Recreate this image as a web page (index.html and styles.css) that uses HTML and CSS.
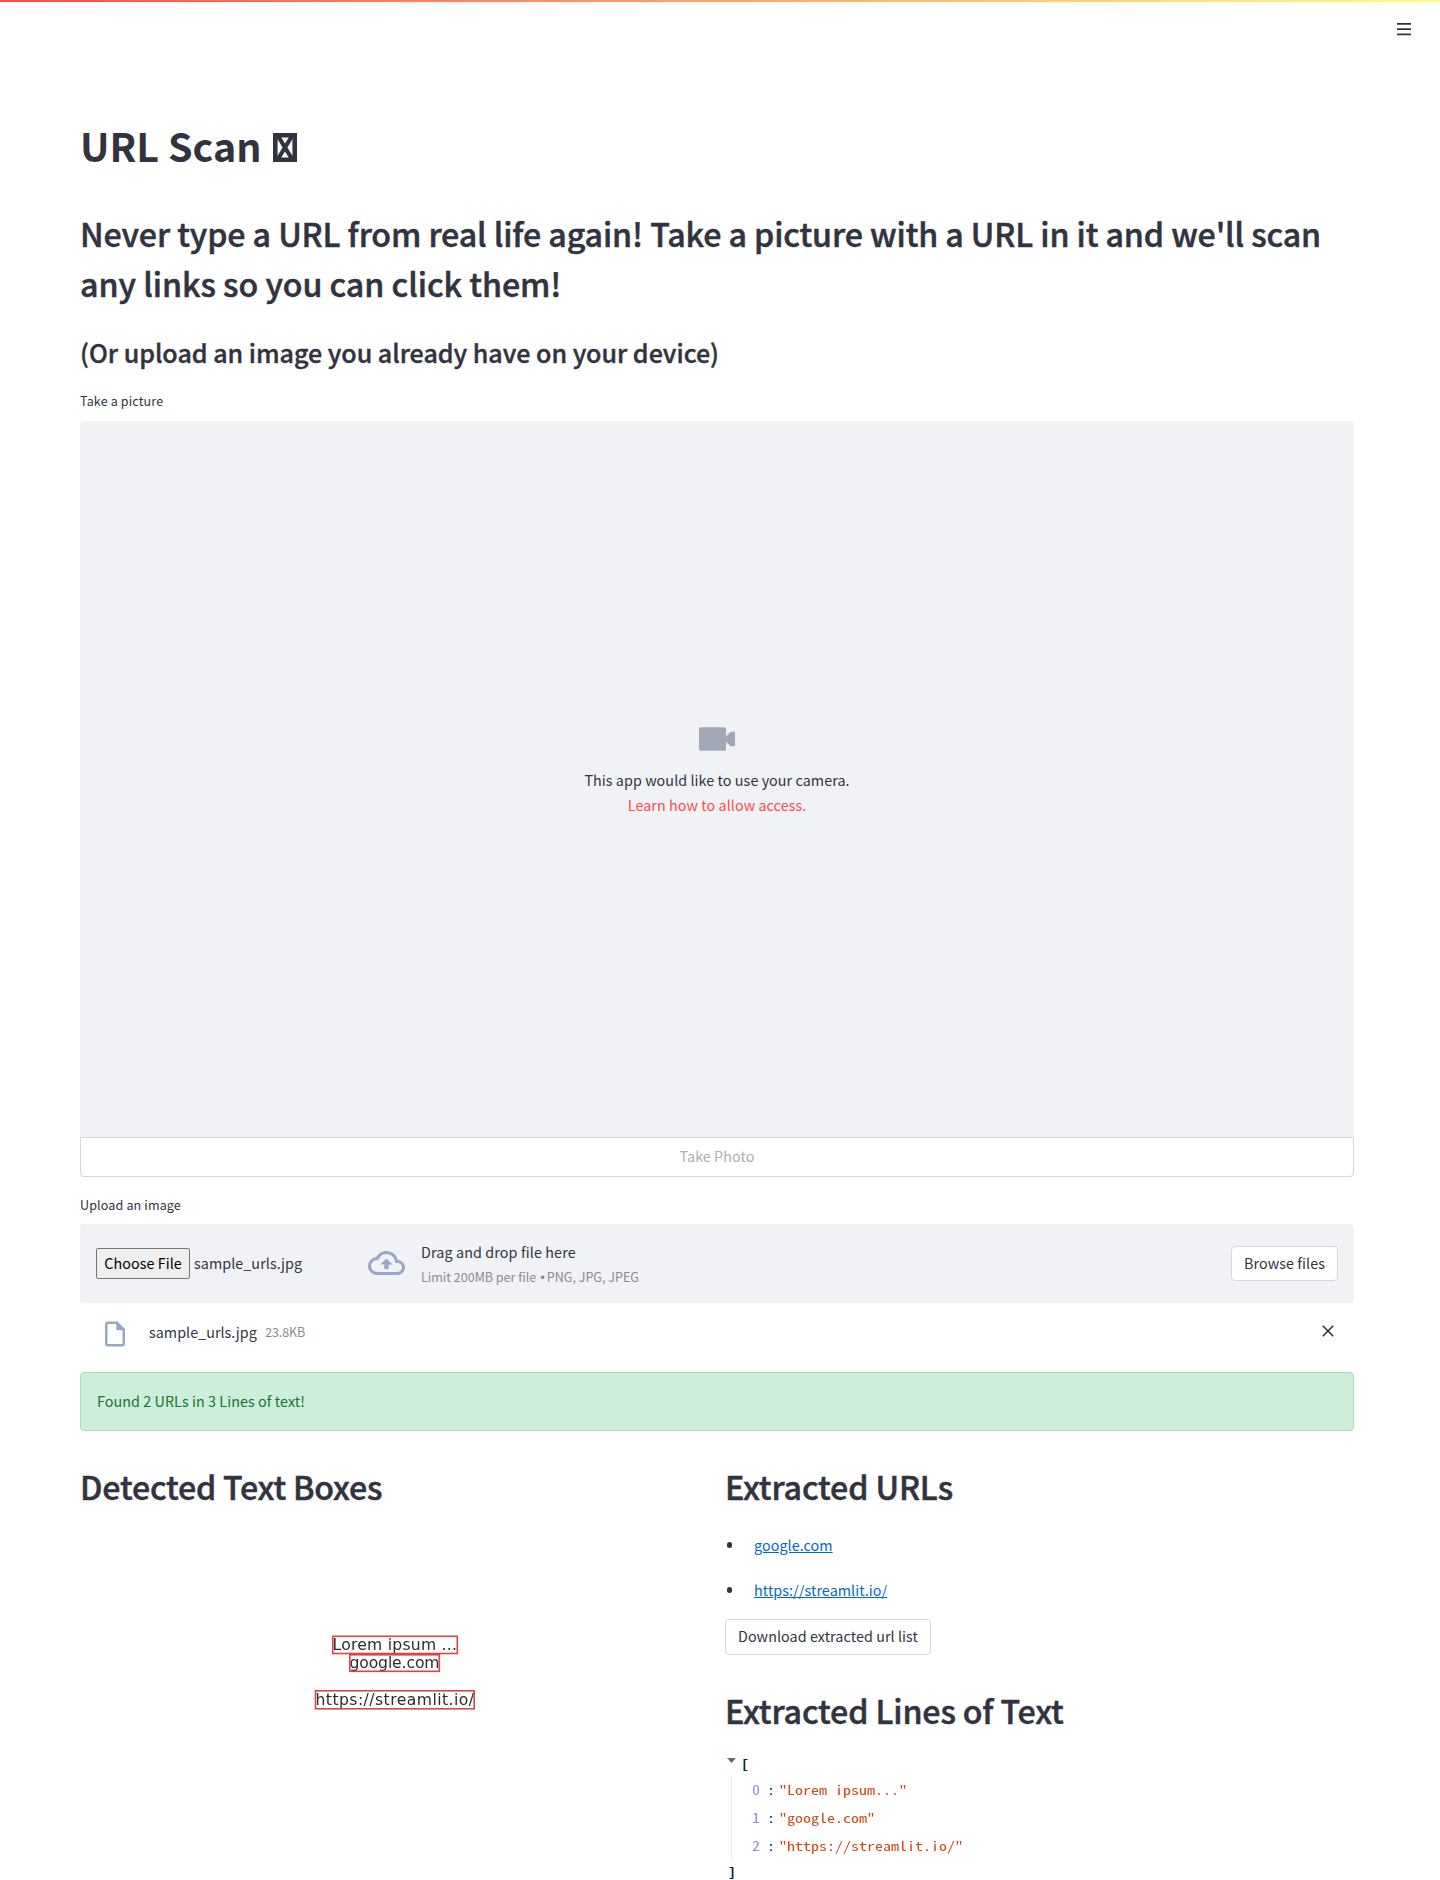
FILE: index.html
```html
<!DOCTYPE html>
<html lang="en">
<head>
<meta charset="utf-8">
<title>URL Scan</title>
<link rel="stylesheet" href="styles.css">
</head>
<body>
<header class="topbar">
  <button class="menu" aria-label="Menu"><svg width="14" height="14" viewBox="0 0 8 8"><path d="M0 0v1h8v-1h-8zm0 2.970v1h8v-1h-8zm0 3v1h8v-1h-8z" fill="currentColor"/></svg></button>
</header>
<main class="page">
  <h1>URL Scan <svg class="glyph" width="24" height="29" viewBox="0 0 24 29"><path fill="none" stroke="currentColor" stroke-width="4.600" d="M2.300 2.300h19.400v24.400H2.300z"/><path fill="none" stroke="currentColor" stroke-width="4.200" d="M5 3l14 23M19 3L5 26"/></svg></h1>
  <h2>Never type a URL from real life again! Take a picture with a URL in it and we'll scan<br><span class="second">any links so you can click them!</span></h2>
  <h3>(Or upload an image you already have on your device)</h3>

  <section class="camera">
    <div class="label">Take a picture</div>
    <div class="viewfinder">
      <svg class="video" width="36" height="24" viewBox="0 0 36 24"><path fill="currentColor" d="M1.500.3h24Q27 .3 27 1.800V9.200l4.500-4.400H36v14.400h-4.500L27 14.800v7.400q0 1.500-1.500 1.500h-24Q0 23.700 0 22.200V1.800Q0 .3 1.500.3z"/></svg>
      <p>This app would like to use your camera.</p>
      <a class="help">Learn how to allow access.</a>
    </div>
    <button class="shoot" disabled>Take Photo</button>
  </section>

  <section class="upload">
    <div class="label">Upload an image</div>
    <div class="dropzone">
      <div class="native"><span class="choose">Choose File</span><span>sample_urls.jpg</span></div>
      <svg class="cloud" width="37" height="36" viewBox="0 0 24 24" preserveAspectRatio="none"><path fill="currentColor" d="M19.350 10.040A7.490 7.490 0 0012 4C9.110 4 6.600 5.640 5.350 8.040A5.994 5.994 0 000 14c0 3.310 2.690 6 6 6h13c2.760 0 5-2.240 5-5 0-2.640-2.050-4.780-4.650-4.960zM19 18H6c-2.210 0-4-1.790-4-4 0-2.050 1.530-3.760 3.560-3.970l1.070-.11.5-.95A5.469 5.469 0 0112 6c2.620 0 4.880 1.860 5.390 4.430l.3 1.500 1.530.11A2.980 2.980 0 0122 15c0 1.650-1.350 3-3 3zM8 13h2.550v3h2.900v-3H16l-4-4z"/></svg>
      <div class="hint"><span>Drag and drop file here</span><small>Limit 200MB per file <span class="dot">•</span> PNG, JPG, JPEG</small></div>
      <button class="btn">Browse files</button>
    </div>
    <div class="file">
      <svg class="doc" width="30" height="30" viewBox="0 0 24 24"><path fill="currentColor" d="M14 2H6c-1.100 0-1.990.9-1.990 2L4 20c0 1.100.89 2 1.990 2H18c1.100 0 2-.9 2-2V8l-6-6zM6 20V4h7v5h5v11H6z"/></svg>
      <span class="name">sample_urls.jpg</span><small class="size">23.8KB</small>
      <svg class="remove" width="12" height="12" viewBox="0 0 12 12"><path d="M.8.8l10.400 10.400M11.200.8L.8 11.200" stroke="currentColor" stroke-width="1.600" fill="none"/></svg>
    </div>
  </section>

  <div class="success">Found 2 URLs in 3 Lines of text!</div>

  <div class="columns">
    <section class="detected">
      <h2>Detected Text Boxes</h2>
      <svg class="scan" width="629" height="330" viewBox="80 1520 629 330">
        <g class="scan-text">
          <text x="332.500" y="1649.500" textLength="124.500">Lorem ipsum ...</text>
          <text x="349.500" y="1668" textLength="90">google.com</text>
          <text x="315.500" y="1705" textLength="158.500">https://streamlit.io/</text>
        </g>
        <g class="scan-boxes">
          <rect x="332.800" y="1636.300" width="124.500" height="17.200"/>
          <rect x="349.800" y="1654.800" width="89.500" height="16.500"/>
          <rect x="315.500" y="1690.800" width="158.700" height="18"/>
        </g>
      </svg>
    </section>
    <section class="results">
      <h2>Extracted URLs</h2>
      <ul>
        <li><a>google.com</a></li>
        <li><a>https://streamlit.io/</a></li>
      </ul>
      <button class="btn">Download extracted url list</button>
      <h2 class="lines-title">Extracted Lines of Text</h2>
      <div class="json">
        <div class="open"><svg width="9" height="5" viewBox="0 0 9 5"><path d="M0 0h9L4.500 5z" fill="#586e75"/></svg><b>[</b></div>
        <div class="items">
          <div><i>0</i><b>:</b><span>"Lorem ipsum..."</span></div>
          <div><i>1</i><b>:</b><span>"google.com"</span></div>
          <div><i>2</i><b>:</b><span>"https://streamlit.io/"</span></div>
        </div>
        <div class="close"><b>]</b></div>
      </div>
    </section>
  </div>
</main>
</body>
</html>
```
FILE: styles.css
```css
* { box-sizing: border-box; margin: 0; padding: 0; }
html { background: #fff; }
body {
  width: 1440px;
  height: 1880px;
  overflow: hidden;
  font: 14.32px/25px "Noto Sans CJK SC", sans-serif;
  letter-spacing: .07px;
  color: #31333f;
}
svg { display: block; flex: none; }
button { font: inherit; letter-spacing: inherit; color: inherit; }
small { font-size: 12.53px; color: #8a8b92; letter-spacing: 0; }

.topbar {
  height: 119px;
  padding: 20.75px 29px 0;
  display: flex;
  justify-content: flex-end;
  align-items: flex-start;
  background: linear-gradient(90deg, #ff4b4b, #fffd80) 0 0 / 100% 2px no-repeat;
}
.menu { border: 0; background: none; padding-top: 2px; }

.page { width: 1274px; margin-left: 80px; }
h1, h2, h3 { white-space: nowrap; }
h1 { font-size: 39.4px; line-height: 52px; font-weight: 700; letter-spacing: 0; }
.glyph { display: inline-block; vertical-align: baseline; margin-left: 3px; }
h2 {
  font-size: 32.2px;
  line-height: 50px;
  font-weight: 500;
  letter-spacing: -.11px;
  -webkit-text-stroke: .5px currentColor;
}
.second { letter-spacing: -.04px; }
.page > h2 { margin-top: 37px; }
h3 {
  margin-top: 27px;
  font-size: 25.07px;
  line-height: 34px;
  font-weight: 500;
  letter-spacing: -.02px;
  -webkit-text-stroke: .4px currentColor;
}
.label { font-size: 12.53px; line-height: 20px; letter-spacing: .15px; }

.camera { padding-top: 22px; }
.viewfinder {
  height: 716px;
  margin-top: 10px;
  background: #f0f2f6;
  border-radius: 4px 4px 0 0;
  display: flex;
  flex-direction: column;
  align-items: center;
  padding-top: 306px;
}
.video { color: #a3a8b8; margin-bottom: 16px; }
.help { color: #ff4b4b; }
.shoot {
  display: block;
  width: 100%;
  height: 40px;
  padding-bottom: 3px;
  border: 1px solid #d6d6d9;
  border-radius: 0 0 4px 4px;
  background: #fff;
  color: #adadb2;
}

.upload { padding-top: 18px; }
.dropzone {
  height: 79px;
  margin-top: 9px;
  padding: 0 16px 1px;
  display: flex;
  align-items: center;
  background: #f0f2f6;
  border-radius: 4px;
}
.native { width: 272px; display: flex; align-items: center; gap: 4px; line-height: 24px; }
.native > span:last-child { padding-bottom: 1px; }
.choose {
  width: 94px;
  height: 31px;
  line-height: 28px;
  text-align: center;
  color: #000;
  background: #efefef;
  border: 1px solid #767676;
  border-radius: 2px;
}
.cloud { color: #98a6c8; margin-right: 16px; }
.hint { display: flex; flex-direction: column; line-height: 25px; padding-top: 1px; }
.hint > span { letter-spacing: .12px; }
.dot { font: 12px "DejaVu Sans", sans-serif; letter-spacing: -2px; }
.dropzone .btn { margin-left: auto; }
.btn {
  height: 35px;
  padding: 0 12px 1px;
  border: 1px solid #d6d6d9;
  border-radius: 4px;
  background: #fff;
  white-space: nowrap;
}
.dropzone .btn { width: 107px; }
.file {
  height: 69px;
  padding: 0 20px 13px 20px;
  display: flex;
  align-items: center;
}
.doc { color: #98a6c8; margin: 5px 19px 0 0; }
.name { margin-right: 8.5px; letter-spacing: .04px; }
.size { letter-spacing: -.15px; }
.remove { margin: 0 0 1px auto; }

.success {
  height: 59px;
  padding: 0 16px;
  line-height: 55px;
  color: #177233;
  background: #cdeed8;
  border: 1px solid #a3e0b6;
  border-radius: 4px;
}

.columns { display: grid; grid-template-columns: 629px 629px; gap: 16px; padding-top: 30px; }
.columns h2 { letter-spacing: -.14px; }
.columns .detected h2 { margin-bottom: 9px; letter-spacing: -.22px; }
.scan-text { font: 15.6px "DejaVu Sans", sans-serif; letter-spacing: 0; fill: #2c2c2c; filter: blur(.35px); }
.scan-boxes { fill: none; stroke: #d5474b; stroke-width: 1.6px; filter: blur(.3px); }
ul { list-style: none; margin-top: 21px; }
li { display: flex; align-items: center; height: 25px; margin-bottom: 20px; }
li::before { content: ""; width: 5.4px; height: 5.4px; border-radius: 50%; background: #31333f; margin: 1px 21.600px 0 2px; }
li:last-child { margin-bottom: 0; }
li a { color: #0068c9; text-decoration: underline; }
.results > .btn { display: block; width: 206px; height: 36px; margin-top: 17px; padding-bottom: 3px; }
.lines-title { margin-top: 30px; }

.json { margin-top: 15px; font: 13px/28px "Noto Sans Mono CJK SC", monospace; letter-spacing: 0; }
.json b, .json i, .json span { transform: scaleX(1.23); transform-origin: left; }
.json b { display: block; color: #002b36; font-weight: 700; }
.open { display: flex; height: 26px; padding: 8px 0 0 2px; }
.open b { line-height: 12px; margin-left: 5px; }
.items { margin-left: 6px; border-left: 1px solid #ebebeb; height: 85px; padding-left: 20px; }
.items div { display: flex; height: 28px; }
.items i { font-style: normal; color: #8c8fd8; width: 14.5px; }
.items b { width: 12.5px; font-weight: 500; }
.items span { color: #cb4b16; }
.close { height: 24px; line-height: 22px; padding-left: 3px; }
```
